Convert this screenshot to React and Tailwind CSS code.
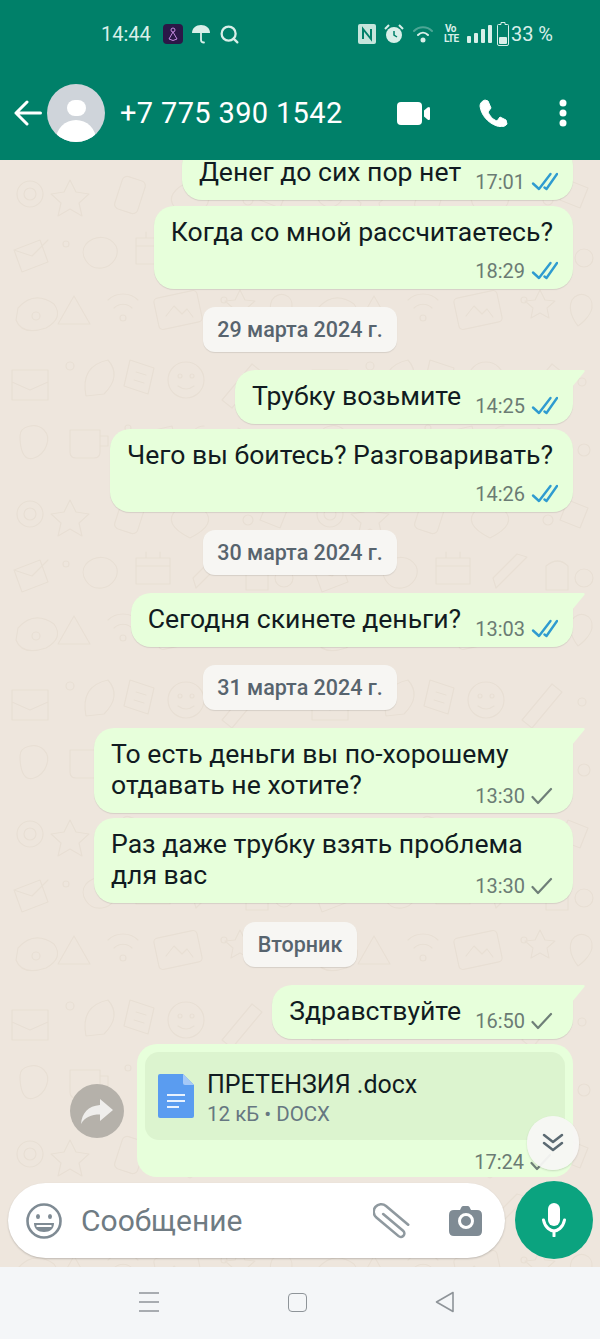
import { Search } from 'lucide-react'

const font = { fontFamily: 'Roboto, sans-serif' }

function DoubleTick() {
  return (
    <svg width="27" height="20" viewBox="0 0 27 20" fill="none" stroke="#2f9bd0" strokeWidth="2.4" strokeLinecap="round" strokeLinejoin="round">
      <path d="M2 11.500L8 17L19.500 2" />
      <path d="M13.500 15.500L15.500 17L26 2" />
    </svg>
  )
}

function SingleTick() {
  return (
    <svg width="27" height="20" viewBox="0 0 27 20" fill="none" stroke="#6f7f78" strokeWidth="2.2" strokeLinecap="round" strokeLinejoin="round">
      <path d="M1.500 11l5.500 6L20 3" />
    </svg>
  )
}

function Tail() {
  return (
    <svg className="absolute -right-3 top-0" width="13" height="17" viewBox="0 0 13 17">
      <path d="M0 0H11.5C12.8 0 13 1 12.3 2L0 17Z" fill="#e7ffdb" />
    </svg>
  )
}

function Meta({ time, read }) {
  return (
    <div className="flex items-center gap-[6px] text-[20px] leading-[20px] text-[#6b7b74] whitespace-nowrap">
      <span>{time}</span>
      {read ? <DoubleTick /> : <SingleTick />}
    </div>
  )
}

// one line, time sits beside the text
function InlineBubble({ text, time, read = true, tail = false }) {
  return (
    <div className={`relative self-end flex items-end gap-[14px] h-[54px] pl-[17px] pr-[15px] pt-[10px] pb-[8px] bg-[#e7ffdb] rounded-[20px] shadow-[0_1px_1px_rgba(0,0,0,0.1)] ${tail ? 'rounded-tr-none' : ''}`}>
      <div className="self-start text-[26.6px] leading-[32px] text-[#111b21] whitespace-nowrap">{text}</div>
      <Meta time={time} read={read} />
      {tail && <Tail />}
    </div>
  )
}

// time on its own row under the text
function BlockBubble({ text, time, read = true }) {
  return (
    <div className="self-end flex flex-col h-[83px] pl-[17px] pr-[15px] pt-[10px] bg-[#e7ffdb] rounded-[20px] shadow-[0_1px_1px_rgba(0,0,0,0.1)]">
      <div className="pr-[5px] text-[26.6px] leading-[32px] text-[#111b21] whitespace-nowrap">{text}</div>
      <div className="self-end mt-[13px]"><Meta time={time} read={read} /></div>
    </div>
  )
}

// two lines, time shares the row with the second one
function WrapBubble({ first, second, time, tail = false }) {
  return (
    <div className={`relative self-end w-[479px] pl-[17px] pr-[15px] pt-[10px] pb-[13px] bg-[#e7ffdb] rounded-[20px] shadow-[0_1px_1px_rgba(0,0,0,0.1)] text-[26.6px] leading-[31px] text-[#111b21] ${tail ? 'rounded-tr-none' : ''}`}>
      <div>{first}</div>
      <div className="flex items-end justify-between">
        <span>{second}</span>
        <div className="-mb-[6px]"><Meta time={time} /></div>
      </div>
      {tail && <Tail />}
    </div>
  )
}

function DateChip({ label }) {
  return (
    <div className="self-center h-[45px] px-[14.500px] pt-[1px] flex items-center rounded-[12px] bg-[#f7f6f3] shadow-[0_1px_1px_rgba(0,0,0,0.1)] text-[21.5px] font-medium text-[#57646e]">
      {label}
    </div>
  )
}

function Wallpaper() {
  return (
    <svg className="absolute inset-0 w-full h-full" fill="none" stroke="#e8dfd4" strokeWidth="1.200" strokeLinecap="round" strokeLinejoin="round">
      <defs>
        <pattern id="doodles" width="300" height="320" patternUnits="userSpaceOnUse">
          <circle cx="30" cy="34" r="13" />
          <circle cx="30" cy="34" r="6" />
          <path d="M70 20l6 12l13 2l-10 9l3 13l-12 -7l-12 7l3 -13l-10 -9l13 -2z" />
          <rect x="118" y="18" width="24" height="34" rx="5" transform="rotate(18 130 35)" />
          <path d="M176 30q14 -14 28 0t-14 28q-28 -14 -14 -28z" />
          <circle cx="232" cy="22" r="3" />
          <circle cx="248" cy="40" r="5" />
          <path d="M268 20l20 8l-8 20l-20 -8z" />
          <path d="M14 90l26 -10l8 22l-26 10zM14 90l18 6l16 -16" />
          <circle cx="66" cy="84" r="3" />
          <path d="M86 84c10 -10 24 -8 30 2c4 8 -2 20 -14 22c-14 2 -24 -14 -16 -24z" />
          <path d="M136 78h34v26h-34zM136 86h34M146 78v-6M160 78v-6" />
          <path d="M196 108l30 -30M196 108l-3 -10l24 -24l10 3z" />
          <path d="M246 86q12 -10 22 0v24h-22z" />
          <circle cx="284" cy="98" r="9" />
          <path d="M18 148q16 -18 36 -4q10 14 -8 24q-24 8 -30 -8z" />
          <circle cx="36" cy="156" r="4" />
          <path d="M74 136l16 28h-32z" />
          <path d="M108 140c8 -8 22 -8 30 0M114 148c5 -5 13 -5 18 0" />
          <circle cx="123" cy="158" r="3" />
          <rect x="156" y="134" width="44" height="32" rx="4" transform="rotate(-12 178 150)" />
          <path d="M166 156l8 -10l8 8l5 -5l6 8" />
          <circle cx="224" cy="140" r="3" />
          <path d="M240 130l5 10l10 1l-8 7l2 10l-9 -5l-9 5l2 -10l-8 -7l10 -1z" />
          <path d="M272 140c6 -10 22 -6 20 8c-2 10 -14 18 -14 18s-12 -14 -6 -26z" />
          <path d="M12 210h36v30h-36zM12 222l18 8l18 -8" />
          <circle cx="70" cy="206" r="4" />
          <path d="M86 236q-6 -30 22 -36q14 16 -4 34z" />
          <path d="M130 200l24 8l-6 26l-24 -8z" />
          <path d="M136 212l10 3M134 220l10 3" />
          <circle cx="186" cy="220" r="18" />
          <circle cx="180" cy="216" r="2" />
          <circle cx="192" cy="216" r="2" />
          <path d="M178 226q8 6 16 0" />
          <path d="M222 240l30 -36l10 8l-30 36z" />
          <circle cx="282" cy="222" r="4" />
          <path d="M20 276c0 -10 16 -14 24 -6s2 24 -10 28s-14 -12 -14 -22z" />
          <path d="M70 270h30v22q0 6 -6 6h-18q-6 0 -6 -6zM100 276h8v10h-8" />
          <circle cx="128" cy="268" r="3" />
          <path d="M146 272l26 -6l6 24l-26 6z" />
          <path d="M204 266a14 14 0 1 0 14 14" />
          <path d="M238 268l30 14l-30 14l6 -14z" />
          <circle cx="284" cy="290" r="6" />
        </pattern>
      </defs>
      <rect width="100%" height="100%" fill="url(#doodles)" stroke="none" />
    </svg>
  )
}

export default function App() {
  return (
    <div className="w-[600px] h-[1339px] flex flex-col overflow-hidden bg-[#eee6dd]" style={font}>
      {/* status bar */}
      <div className="h-[70px] shrink-0 bg-[#008069] flex items-center pl-[101px] pr-[47px] pb-[2px] text-[#d9efe9] text-[20px]">
        <span>14:44</span>
        <div className="ml-[12px] w-[20px] h-[20px] rounded-[4px] bg-[#2b1747] flex items-center justify-center">
          <svg width="12" height="15" viewBox="0 0 12 15" fill="none" stroke="#c58be0" strokeWidth="1">
            <circle cx="6" cy="3" r="2" />
            <path d="M6 5L2 12q4 3 8 0z" />
          </svg>
        </div>
        <svg className="ml-[8px]" width="20" height="22" viewBox="0 0 20 22" fill="#d9efe9">
          <path d="M1 10C1 5 5 2 10 2s9 3 9 8z" />
          <path d="M10 10v7q0 2.500 3 2.500" fill="none" stroke="#d9efe9" strokeWidth="1.800" strokeLinecap="round" />
        </svg>
        <Search className="ml-[8px]" size={21} strokeWidth={2.6} />
        <div className="flex-1" />
        <svg width="18" height="20" viewBox="0 0 18 20">
          <rect width="18" height="20" rx="2" fill="#c5e5dc" />
          <path d="M5 15V5l8 10V5" fill="none" stroke="#008069" strokeWidth="2" />
        </svg>
        <svg className="ml-[8px]" width="20" height="22" viewBox="0 0 20 22" fill="#d9efe9">
          <circle cx="10" cy="12" r="8" />
          <path d="M10 8v4l3 2" fill="none" stroke="#008069" strokeWidth="1.500" />
          <path d="M1 6l4 -4M19 6l-4 -4" stroke="#d9efe9" strokeWidth="2" />
        </svg>
        <svg className="ml-[8px]" width="22" height="18" viewBox="0 0 22 18" fill="none" stroke="#d9efe9" strokeWidth="2" strokeLinecap="round">
          <path d="M2 6c5 -5 13 -5 18 0" opacity="0.35" />
          <path d="M6 10c3 -3 7 -3 10 0" />
          <circle cx="11" cy="15" r="1.500" fill="#d9efe9" />
        </svg>
        <div className="ml-[10px] w-[13px] text-[10px] leading-[10px] font-bold text-center tracking-[-0.5px]">Vo<br />LTE</div>
        <div className="ml-[10px] flex items-end gap-[3px] h-[18px]">
          <div className="w-[4px] h-[7px] bg-[#d9efe9] rounded-[1px]" />
          <div className="w-[4px] h-[10px] bg-[#d9efe9] rounded-[1px]" />
          <div className="w-[4px] h-[14px] bg-[#d9efe9] rounded-[1px]" />
          <div className="w-[4px] h-[18px] bg-[#d9efe9] rounded-[1px]" />
        </div>
        <svg className="ml-[5px]" width="12" height="24" viewBox="0 0 12 24">
          <path d="M4 0.500h4v2h2.500q1 0 1 1V22q0 1.500 -1.500 1.500H2q-1.500 0 -1.500 -1.500V3.500q0 -1 1 -1H4z" fill="none" stroke="#d9efe9" />
          <rect x="2" y="15" width="8" height="7" rx="1" fill="#d9efe9" />
        </svg>
        <span className="ml-[2px]">33 %</span>
      </div>

      {/* header */}
      <div className="h-[90px] shrink-0 bg-[#008069] flex items-center pl-[14px] pr-[33px] pb-[4px] text-white">
        <svg width="28" height="26" viewBox="0 0 28 26" fill="none" stroke="white" strokeWidth="3" strokeLinecap="round" strokeLinejoin="round">
          <path d="M26.500 13H2M13 2L2 13l11 11" />
        </svg>
        <div className="ml-[5px] w-[58px] h-[58px] rounded-full bg-[#cfd4da] overflow-hidden flex flex-col items-center">
          <div className="mt-[16px] w-[19px] h-[21px] rounded-full bg-white" />
          <div className="mt-[4px] w-[40px] h-[30px] rounded-t-full bg-white" />
        </div>
        <div className="ml-[15px] mt-[2px] text-[29px] tracking-[0.35px]">+7 775 390 1542</div>
        <div className="flex-1" />
        <svg width="33" height="23" viewBox="0 0 33 23" fill="white">
          <rect width="25" height="23" rx="4" />
          <path d="M27 8.500l3.500 -3q2.500 -1.500 2.500 1v10q0 2.500 -2.500 1l-3.500 -3z" />
        </svg>
        <svg className="ml-[48px]" width="30" height="28" viewBox="0 0 30 28" fill="white" stroke="white" strokeLinejoin="round">
          <path d="M7 1L10 2L13 9L10 13C12 17 14 20 19 22L22 18L28 21L29 25C27 28 23 28 19 27C10 24 3 16 2 7C2 4 4 2 7 1Z" />
        </svg>
        <svg className="ml-[51px]" width="8" height="28" viewBox="0 0 8 28" fill="white">
          <circle cx="4" cy="4" r="3.500" />
          <circle cx="4" cy="14" r="3.500" />
          <circle cx="4" cy="24" r="3.500" />
        </svg>
      </div>

      {/* chat */}
      <div className="relative flex-1 min-h-0 overflow-hidden flex flex-col">
        <Wallpaper />
        <div className="relative flex-1 min-h-0 overflow-hidden flex flex-col pr-[27px]">
          <div className="-mt-[14px]" />
          <InlineBubble text="Денег до сих пор нет" time="17:01" />
          <div className="mt-[6px] self-end"><BlockBubble text="Когда со мной рассчитаетесь?" time="18:29" /></div>
          <div className="mt-[18px] pl-[27px] flex flex-col"><DateChip label="29 марта 2024 г." /></div>
          <div className="mt-[18px] self-end"><InlineBubble text="Трубку возьмите" time="14:25" tail /></div>
          <div className="mt-[5px] self-end"><BlockBubble text="Чего вы боитесь? Разговаривать?" time="14:26" /></div>
          <div className="mt-[18px] pl-[27px] flex flex-col"><DateChip label="30 марта 2024 г." /></div>
          <div className="mt-[18px] self-end"><InlineBubble text="Сегодня скинете деньги?" time="13:03" tail /></div>
          <div className="mt-[18px] pl-[27px] flex flex-col"><DateChip label="31 марта 2024 г." /></div>
          <div className="mt-[18px] self-end"><WrapBubble first="То есть деньги вы по-хорошему" second="отдавать не хотите?" time="13:30" tail /></div>
          <div className="mt-[5px] self-end"><WrapBubble first="Раз даже трубку взять проблема" second="для вас" time="13:30" /></div>
          <div className="mt-[19px] pl-[27px] flex flex-col"><DateChip label="Вторник" /></div>
          <div className="mt-[18px] self-end"><InlineBubble text="Здравствуйте" time="16:50" read={false} tail /></div>

          {/* document message */}
          <div className="mt-[5px] self-end flex items-center">
            <div className="mr-[13px] w-[54px] h-[54px] rounded-full bg-[#b5b1aa] flex items-center justify-center">
              <svg width="34" height="28" viewBox="0 0 34 28" fill="#efeeec">
                <path d="M20 2l13 11l-13 11v-6.500C11 17.500 5 20 1 27c1 -11 7 -18 19 -19z" />
              </svg>
            </div>
            <div className="relative w-[436px] h-[133px] bg-[#e7ffdb] rounded-[20px] p-[8px]">
              <div className="h-[88px] rounded-[14px] bg-[#dcf4cf] flex items-center pl-[13px]">
                <svg width="36" height="44" viewBox="0 0 36 44">
                  <path d="M2 0H25L36 11V42q0 2 -2 2H2q-2 0 -2 -2V2q0 -2 2 -2z" fill="#5a9cf0" />
                  <path d="M25 0L36 11H27q-2 0 -2 -2z" fill="#a6c9f7" />
                  <path d="M9 21H27M9 27H27M9 33H21" stroke="#e9f2fe" strokeWidth="2" />
                </svg>
                <div className="ml-[13px] pt-[3px]">
                  <div className="text-[25px] leading-[30px] text-[#111b21]">ПРЕТЕНЗИЯ .docx</div>
                  <div className="mt-[2px] text-[20.500px] leading-[24px] text-[#667781]">12 кБ • DOCX</div>
                </div>
              </div>
              <div className="absolute right-[16px] bottom-[5px]"><Meta time="17:24" /></div>
            </div>
          </div>
        </div>

        {/* scroll down button */}
        <div className="absolute right-[21px] top-[956px] w-[52px] h-[54px] rounded-full bg-[#f7f7f4]/95 flex items-center justify-center shadow-[0_1px_2px_rgba(0,0,0,0.15)]">
          <svg width="22" height="20" viewBox="0 0 22 20" fill="none" stroke="#5b6a72" strokeWidth="2.500" strokeLinecap="round" strokeLinejoin="round">
            <path d="M2 2l9 7l9 -7M2 10l9 7l9 -7" />
          </svg>
        </div>

        {/* composer */}
        <div className="relative shrink-0 h-[90px] flex items-start pl-[8px] pr-[7px]">
          <div className="mt-[6px] w-[497px] h-[75px] rounded-full bg-white shadow-[0_1px_2px_rgba(0,0,0,0.2)] flex items-center pl-[17px] pr-[23px]">
            <svg width="38" height="38" viewBox="0 0 38 38" fill="none" stroke="#7f8b94" strokeWidth="2.600">
              <circle cx="19" cy="19" r="16.500" />
              <ellipse cx="13" cy="14.500" rx="2" ry="2.500" fill="#7f8b94" stroke="none" />
              <ellipse cx="25" cy="14.500" rx="2" ry="2.500" fill="#7f8b94" stroke="none" />
              <path d="M9 21h20c0 6 -4 9 -10 9s-10 -3 -10 -9z" fill="#7f8b94" stroke="none" />
              <path d="M11.500 23h15v2h-15z" fill="white" stroke="none" />
            </svg>
            <span className="ml-[18px] text-[30px] text-[#6f7b83]">Сообщение</span>
            <div className="flex-1" />
            <svg width="40" height="40" viewBox="-20 -20 40 40" fill="none" stroke="#8f999f" strokeWidth="2.600" strokeLinecap="round">
              <g transform="rotate(40)">
                <path d="M-12 1H14a3.500 3.500 0 0 1 0 7H-15a7.500 7.500 0 0 1 0 -15H14" />
              </g>
            </svg>
            <svg className="ml-[36px]" width="33" height="30" viewBox="0 0 33 30">
              <path d="M11 4l1.500 -3q.5 -1 2 -1h4q1.500 0 2 1L22 4h6q5 0 5 5v16q0 5 -5 5H5q-5 0 -5 -5V9q0 -5 5 -5z" fill="#7f8b94" />
              <circle cx="17" cy="15" r="6.500" fill="#7f8b94" stroke="white" strokeWidth="3" />
            </svg>
          </div>
          <div className="ml-[10px] mt-[4px] w-[78px] h-[78px] rounded-full bg-[#0ba37f] flex items-center justify-center">
            <svg width="24" height="34" viewBox="0 0 24 34" fill="none" stroke="white" strokeWidth="3" strokeLinecap="round">
              <rect x="6" y="0" width="12" height="23" rx="6" fill="white" stroke="none" />
              <path d="M1.500 17C3 25 9 28 12 28S21 25 22.500 17" />
              <path d="M12 28V33" />
            </svg>
          </div>
        </div>
      </div>

      {/* system nav */}
      <div className="h-[72px] shrink-0 bg-[#f4f6f8] flex items-center pb-[2px] text-[#8e9499]">
        <svg className="ml-[138px]" width="22" height="22" viewBox="0 0 22 22" stroke="currentColor" strokeWidth="1.600">
          <path d="M1 2H21M1 11H21M1 20H21" />
        </svg>
        <div className="ml-[128px] w-[19px] h-[19px] rounded-[4px] border-[1.500px] border-current" />
        <svg className="ml-[128px]" width="20" height="22" viewBox="0 0 20 22" fill="none" stroke="currentColor" strokeWidth="1.600" strokeLinejoin="round">
          <path d="M18 1.500V20.500L1.500 11Z" />
        </svg>
      </div>
    </div>
  )
}
